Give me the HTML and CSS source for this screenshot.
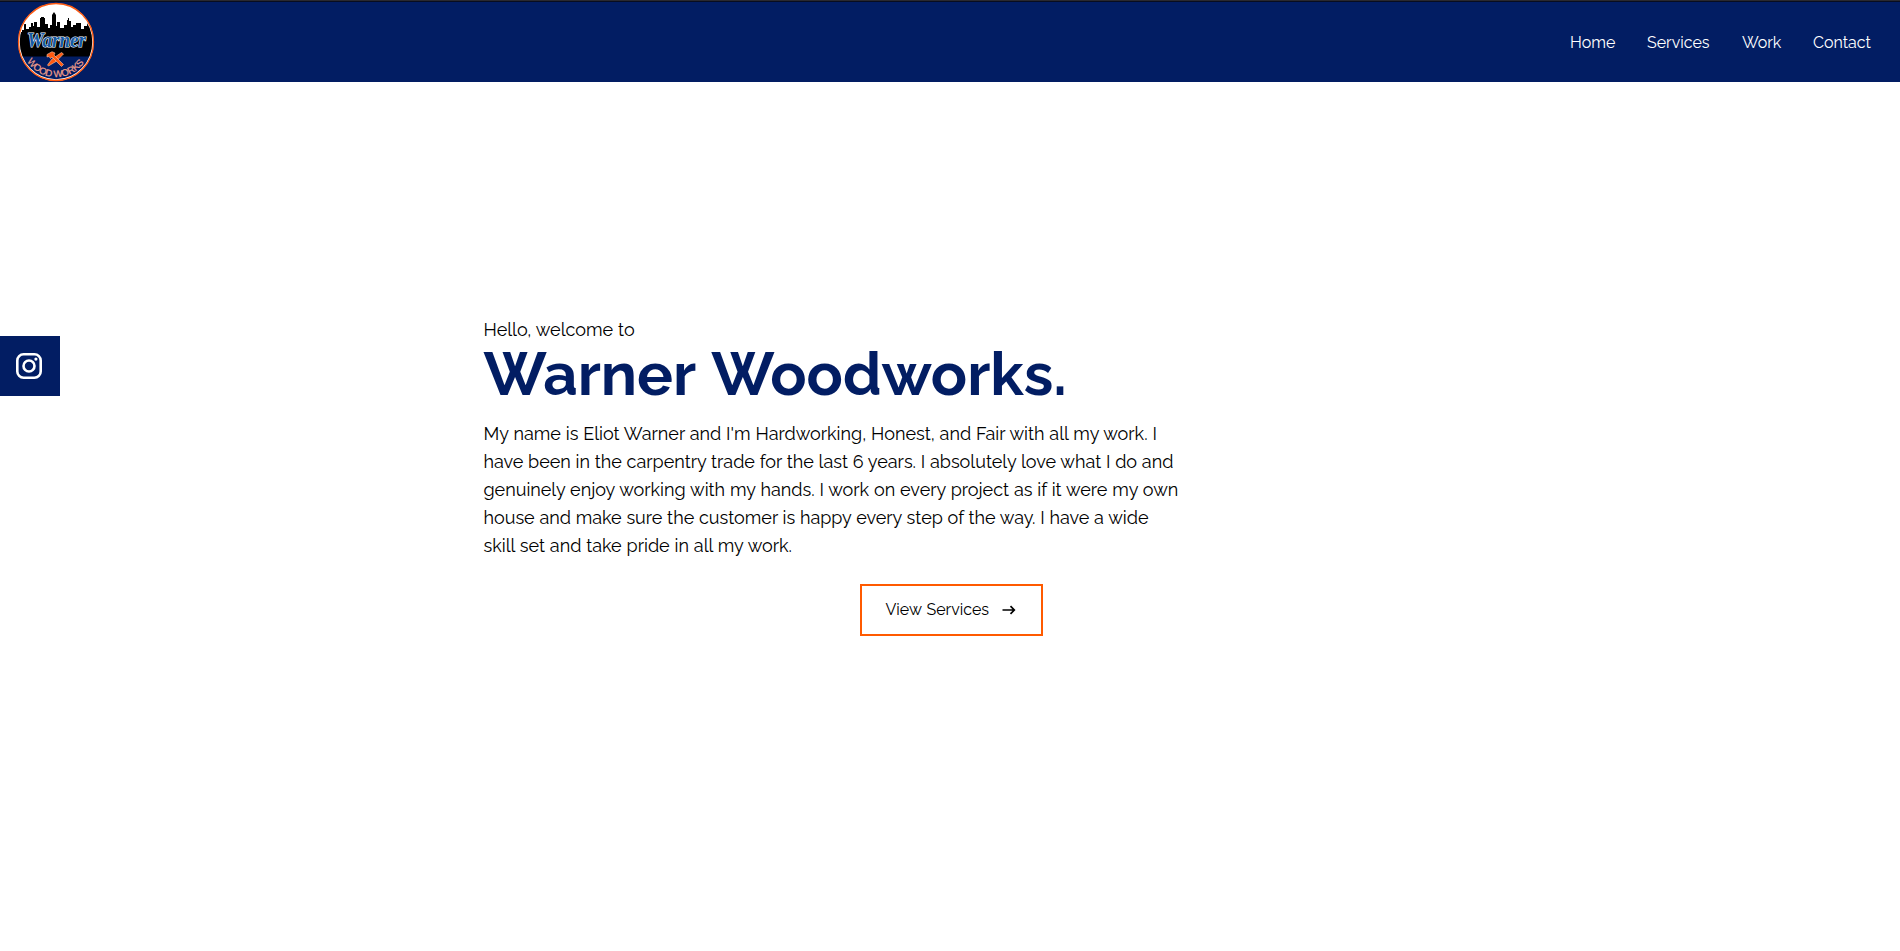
FILE: index.html
```html
<!DOCTYPE html>
<html lang="en">
<head>
<meta charset="utf-8">
<title>Warner Woodworks</title>
<link rel="stylesheet" href="styles.css">
</head>
<body>
<header class="navbar">
  <a class="brand" href="#">
    <svg class="logo" viewBox="0 0 80 80" width="80" height="80" role="img" aria-label="Warner Wood Works">
      <defs>
        <clipPath id="disc"><ellipse cx="40" cy="40" rx="37" ry="38"/></clipPath>
        <path id="arc" d="M10.500 58.500A34.500 34.500 0 0 0 69.500 58.500"/>
      </defs>
      <g clip-path="url(#disc)">
        <path fill="#fff" d="M0 0h80v40H0z"/>
        <path fill="#000" d="M0 30h6v-2h2v-6h2v5h3v-2h2v-4h2v3h1v-4h3v5h3V16h1v-1h3v1h1v6h3v4h2v-3h2V13l2-3 2 3v11h1v-4h3v6h4v-3h3v-5h1v-2h1v3h2v6h2v-2h3v-2h5v6h3v-3h3v-3h3v5h8v29H0z"/>
        <path fill="#021d63" d="M0 54.500h80V80H0z"/>
      </g>
      <ellipse cx="40" cy="40" rx="37" ry="38" fill="none" stroke="#fff" stroke-width="1.500"/>
      <ellipse cx="40" cy="40" rx="37.500" ry="38.500" fill="none" stroke="#ff5910" stroke-width="1.300"/>
      <text class="logo-script" x="11" y="44.500" textLength="59" lengthAdjust="spacingAndGlyphs">Warner</text>
      <g fill="#ff5910" stroke="#f7c4a8" stroke-width=".6">
        <path d="M45.500 50.500l2 1.500-7.500 7.500-7.500 4.500-1-1 4.500-6z"/>
        <path d="M31 52.500l5-2.800 3 1.300-1 2 9.500 9.500-2 2-9.500-9.500-1.500 1.500-1.500-2-2 .500z"/>
      </g>
      <text class="logo-arc"><textPath href="#arc" startOffset="1" textLength="67" lengthAdjust="spacing">WOOD WORKS</textPath></text>
    </svg>
  </a>
  <nav class="menu">
    <a class="link home" href="#">Home</a>
    <a class="link services" href="#">Services</a>
    <a class="link work" href="#">Work</a>
    <a class="link contact" href="#">Contact</a>
  </nav>
</header>
<aside class="social">
  <svg viewBox="0 0 26 26" width="26" height="26" fill="none" stroke="#fff" aria-label="Instagram">
    <rect x="1.300" y="1.300" width="23.400" height="23.400" rx="6.300" stroke-width="2.600"/>
    <circle cx="13" cy="13" r="5.500" stroke-width="2.600"/>
    <circle cx="19.900" cy="6.100" r="1.600" fill="#fff" stroke="none"/>
  </svg>
</aside>
<main class="hero">
  <p class="greeting">Hello, welcome to</p>
  <h1 class="title">Warner Woodworks.</h1>
  <p class="about">
    <span class="line">My name is Eliot Warner and I'm Hardworking, Honest, and Fair with all my work. I</span>
    <span class="line snug">have been in the carpentry trade for the last 6 years. I absolutely love what I do and</span>
    <span class="line">genuinely enjoy working with my hands. I work on every project as if it were my own</span>
    <span class="line snug">house and make sure the customer is happy every step of the way. I have a wide</span>
    <span class="line">skill set and take pride in all my work.</span>
  </p>
  <a class="button" href="#"><span class="label">View Services</span>
    <svg viewBox="0 0 14 10" width="14" height="10" fill="none" stroke="#000" stroke-width="1.700"><path d="M.5 5H12M8.500 1.200L12.300 5 8.500 8.800"/></svg>
  </a>
</main>
</body>
</html>
```
FILE: styles.css
```css
* { box-sizing: border-box; }
body { margin: 0; height: 951px; overflow: hidden; background: #fff; color: #000; font-family: Raleway, Lato, sans-serif; }
a { color: inherit; text-decoration: none; }
p, h1 { margin: 0; }
.navbar { height: 82px; background: #021d63; border-top: 1px solid #2a292f; box-shadow: inset 0 1px #080d20; display: flex; justify-content: space-between; padding: 1px 29px 0 16px; color: #fff; }
.brand, .logo { display: block; }
.logo-script { font: italic bold 20px "Liberation Serif", serif; fill: #155aa5; stroke: #fff; stroke-width: 1.1px; paint-order: stroke; }
.logo-arc { font: 9.500px "Liberation Sans Narrow", "Liberation Sans", sans-serif; fill: #f5a28b; stroke: #f5a28b; stroke-width: .2px; }
.menu { display: flex; gap: 32px; padding-top: 31px; font-size: 16px; line-height: 20px; }
.link { white-space: nowrap; }
.home { width: 45px; }
.services { width: 63px; }
.work { width: 39px; }
.contact { width: 58px; }
.social { position: absolute; left: 0; top: 336px; width: 60px; height: 60px; background: #021d63; display: flex; align-items: center; padding-left: 16px; }
.hero { width: 933px; margin: 0 auto; padding-top: 234px; }
.greeting { font-size: 18px; line-height: 28px; word-spacing: .3px; }
.title { font-size: 60px; line-height: 60px; font-weight: 700; color: #021d63; white-space: nowrap; word-spacing: 4px; }
.about { padding-top: 16px; font-size: 18px; line-height: 28px; word-spacing: .28px; }
.line { display: block; white-space: nowrap; }
.snug { word-spacing: .16px; }
.button { display: flex; align-items: center; gap: 12px; width: 183px; height: 52px; margin: 24px 374px 0 auto; padding-left: 24px; border: 2px solid #ff5a00; font-size: 16px; white-space: nowrap; }
.label { width: 104px; line-height: 20px; padding-bottom: 1px; word-spacing: .8px; }
```
